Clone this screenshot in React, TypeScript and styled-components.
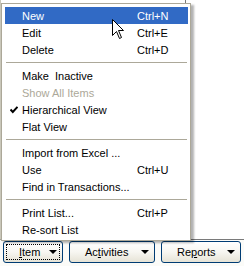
import styled, { createGlobalStyle } from 'styled-components';

const GlobalStyle = createGlobalStyle`
  html, body {
    margin: 0;
    padding: 0;
    background: #ffffff;
  }
  body {
    font-family: 'Liberation Sans', Arial, sans-serif;
    font-size: 11px;
    color: #000000;
  }
`;

const Page = styled.div({
  position: 'relative',
  width: '244px',
  height: '266px',
  overflow: 'hidden',
  display: 'flex',
  flexDirection: 'column'
});

const ListArea = styled.div({
  height: '239px',
  display: 'flex',
  borderLeft: '1px solid #c9c7ba',
  borderBottom: '1px solid #7a7a7a'
});

const ListColumn = styled.div({
  width: '184px',
  borderRight: '1px solid #7a7a7a'
});

const Toolbar = styled.div({
  flex: 1,
  display: 'flex',
  gap: '6px',
  padding: '1px 0 0 3px',
  background: '#fbfbf8'
});

const Button = styled.button<{ $w: number }>({
  position: 'relative',
  height: '22px',
  padding: '0 5px 0 15px',
  border: '1px solid #003c74',
  borderRadius: '3px',
  background: 'linear-gradient(#ffffff 0%, #f7f6f1 50%, #e6e3d6 100%)',
  fontFamily: "'Liberation Sans', Arial, sans-serif",
  fontSize: '11px',
  color: '#000000',
  display: 'flex',
  alignItems: 'center',
  justifyContent: 'space-between',
  boxSizing: 'border-box'
}, (p) => ({ width: `${p.$w}px` }));

const FocusRing = styled.span({
  position: 'absolute',
  inset: '2px',
  border: '1px dotted #000000'
});

const Caret = styled.span({
  width: 0,
  height: 0,
  borderLeft: '4px solid transparent',
  borderRight: '4px solid transparent',
  borderTop: '4px solid #000000'
});

const Menu = styled.div({
  position: 'absolute',
  left: '1px',
  top: '3px',
  width: '190px',
  padding: '3px 2px 2px 3px',
  boxSizing: 'border-box',
  background: '#ffffff',
  border: '1px solid #aca899',
  boxShadow: '3px 2px 2px rgba(0, 0, 0, 0.3)'
});

const Row = styled.div<{ $active?: boolean; $disabled?: boolean }>({
  position: 'relative',
  height: '17px',
  display: 'grid',
  gridTemplateColumns: '115px 1fr',
  alignItems: 'center',
  paddingLeft: '17px',
  whiteSpace: 'pre'
}, (p) => ({
  background: p.$active ? '#316ac5' : 'transparent',
  color: p.$active ? '#ffffff' : p.$disabled ? '#aca899' : '#000000'
}));

const Check = styled.svg({
  position: 'absolute',
  left: '5px',
  top: '5px'
});

const Separator = styled.div({
  height: '9px',
  display: 'flex',
  alignItems: 'center',
  padding: '0 1px'
});

const Line = styled.div({
  flex: 1,
  height: '1px',
  background: '#aca899'
});

const Cursor = styled.svg({
  position: 'absolute',
  left: '112px',
  top: '19px'
});

type Entry = { label: string; key?: string; active?: boolean; disabled?: boolean; checked?: boolean } | 'sep';

const entries: Entry[] = [
  { label: 'New', key: 'Ctrl+N', active: true },
  { label: 'Edit', key: 'Ctrl+E' },
  { label: 'Delete', key: 'Ctrl+D' },
  'sep',
  { label: 'Make  Inactive' },
  { label: 'Show All Items', disabled: true },
  { label: 'Hierarchical View', checked: true },
  { label: 'Flat View' },
  'sep',
  { label: 'Import from Excel ...' },
  { label: 'Use', key: 'Ctrl+U' },
  { label: 'Find in Transactions...' },
  'sep',
  { label: 'Print List...', key: 'Ctrl+P' },
  { label: 'Re-sort List' }
];

export default function App() {
  return (
    <Page>
      <GlobalStyle />
      <ListArea>
        <ListColumn />
      </ListArea>
      <Toolbar>
        <Button $w={60}>
          <FocusRing />
          <span><u>I</u>tem</span>
          <Caret />
        </Button>
        <Button $w={86}>
          <span>Ac<u>t</u>ivities</span>
          <Caret />
        </Button>
        <Button $w={80}>
          <span>Re<u>p</u>orts</span>
          <Caret />
        </Button>
      </Toolbar>
      <Menu>
        {entries.map((e, i) =>
          e === 'sep' ? (
            <Separator key={i}><Line /></Separator>
          ) : (
            <Row key={i} $active={e.active} $disabled={e.disabled}>
              {e.checked && (
                <Check width='8' height='8' viewBox='0 0 8 8'>
                  <path d='M0.5 3.5 L2.8 6 L7.5 0.8' fill='none' stroke='#000' strokeWidth='2' />
                </Check>
              )}
              <span>{e.label}</span>
              <span>{e.key ?? ''}</span>
            </Row>
          )
        )}
      </Menu>
      <Cursor width='13' height='21' viewBox='0 0 13 21'>
        <path d='M0.5 0.5 L0.5 16.5 L4.5 12.5 L7.5 19.5 L9.5 18.5 L6.5 11.5 L11.5 11.5 Z' fill='#fff' stroke='#000' strokeWidth='1' />
      </Cursor>
    </Page>
  );
}
